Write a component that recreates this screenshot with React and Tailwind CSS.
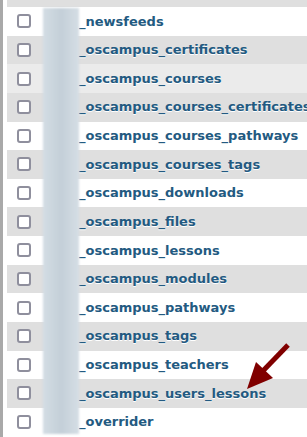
const tables = [
  "_newsfeeds",
  "_oscampus_certificates",
  "_oscampus_courses",
  "_oscampus_courses_certificates",
  "_oscampus_courses_pathways",
  "_oscampus_courses_tags",
  "_oscampus_downloads",
  "_oscampus_files",
  "_oscampus_lessons",
  "_oscampus_modules",
  "_oscampus_pathways",
  "_oscampus_tags",
  "_oscampus_teachers",
  "_oscampus_users_lessons",
  "_overrider",
];

function rowBg(i) {
  if (i === 2) return "bg-[#ebebeb]";
  return i % 2 === 1 ? "bg-[#dfdfdf]" : "bg-white";
}

export default function App() {
  return (
    <div className="relative w-[307px] h-[437px] overflow-hidden bg-white flex font-['DejaVu_Sans',sans-serif]">
      <div className="w-[3px] bg-[#a9a9a9] shrink-0" />
      <div className="flex-1 pl-[4px]">
        <div className="h-[7px] bg-[#dfdfdf]" />
        {tables.map((t, i) => (
          <div key={t} className={`h-[28.64px] flex items-center ${rowBg(i)}`}>
            <div className="ml-[10px] w-[14px] h-[14px] border-2 border-[#8f8f9d] rounded-[3px] bg-white shrink-0" />
            <div className="ml-[48px] text-[13px] font-bold text-[#235a81] whitespace-nowrap [text-shadow:0_1px_0_#fff]">
              {t}
            </div>
          </div>
        ))}
      </div>

      {/* blurred-out prefix */}
      <div className="absolute left-[43px] top-[8px] w-[36px] h-[426px] bg-gradient-to-r from-[#d3dde4] via-[#c4cfd8] to-[#d5dee5] blur-[1px]" />

      {/* arrow */}
      <svg className="absolute left-0 top-0" width="307" height="437" viewBox="0 0 307 437">
        <line x1="288" y1="345" x2="259" y2="375" stroke="#800000" strokeWidth="5" />
        <polygon points="247,389 256,362 273,378" fill="#800000" />
      </svg>
    </div>
  );
}
